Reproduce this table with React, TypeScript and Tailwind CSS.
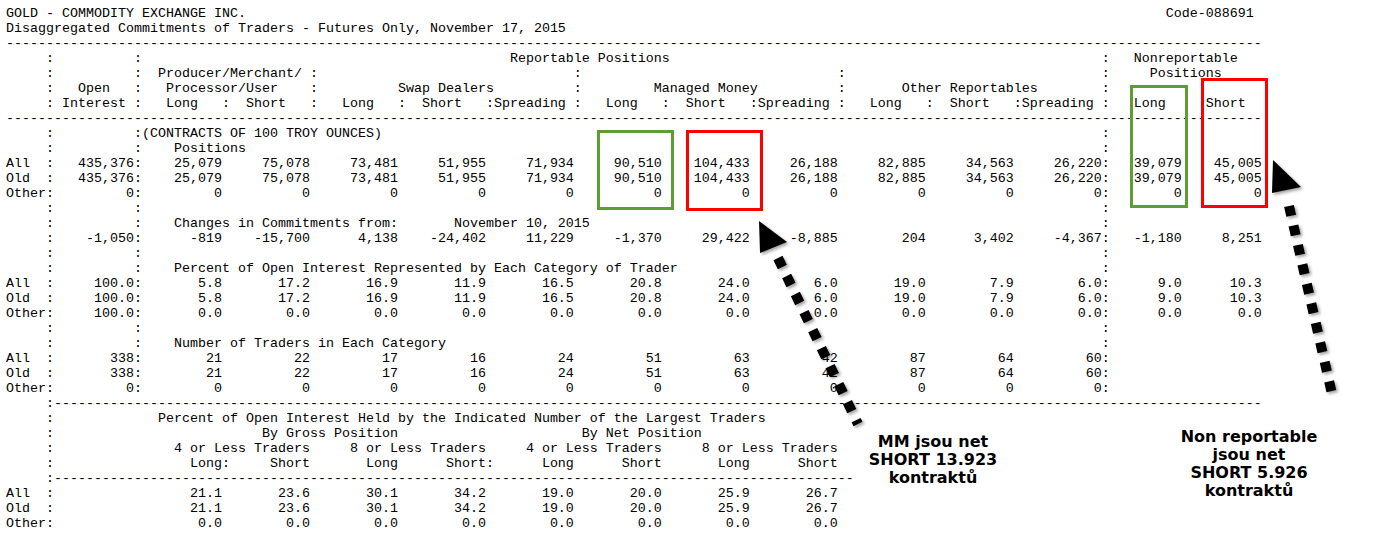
import React from "react";

type Part = [number, string];

// put text pieces on fixed character columns
function line(parts: Part[]): string {
  let s = "";
  for (const [col, txt] of parts) {
    if (s.length < col) s = s.padEnd(col, " ");
    s = s.slice(0, col) + txt;
  }
  return s;
}

// right-align text so its last char lands on column `end`
const r = (end: number, txt: string): Part => [end - txt.length + 1, txt];

const ENDS = [26, 37, 48, 59, 70, 81, 92, 103, 114, 125, 136];

function dataRow(label: string, oi: string, vals: string[], nonrep?: [string, string]): string {
  const parts: Part[] = [];
  if (label) parts.push([0, label]);
  parts.push([5, ":"], r(15, oi), [16, ":"]);
  vals.forEach((v, i) => parts.push(r(ENDS[i], v)));
  parts.push([137, ":"]);
  if (nonrep) parts.push(r(146, nonrep[0]), r(156, nonrep[1]));
  return line(parts);
}

const blank = line([[5, ":"], [16, ":"], [137, ":"]]);
const dashes = "-".repeat(157);

const positions = ["25,079", "75,078", "73,481", "51,955", "71,934", "90,510", "104,433", "26,188", "82,885", "34,563", "26,220"];
const zeros = Array(11).fill("0");
const pct = ["5.8", "17.2", "16.9", "11.9", "16.5", "20.8", "24.0", "6.0", "19.0", "7.9", "6.0"];
const pctZero = Array(11).fill("0.0");
const traders = ["21", "22", "17", "16", "24", "51", "63", "42", "87", "64", "60"];

const BOT_ENDS = [26, 37, 48, 59, 70, 81, 92, 103];
function bottomRow(label: string, vals: string[]): string {
  const parts: Part[] = [[0, label], [5, ":"]];
  vals.forEach((v, i) => parts.push(r(BOT_ENDS[i], v)));
  return line(parts);
}

const lines: string[] = [
  line([[0, "GOLD - COMMODITY EXCHANGE INC."], [145, "Code-088691"]]),
  "Disaggregated Commitments of Traders - Futures Only, November 17, 2015",
  dashes,
  line([[5, ":"], [16, ":"], [63, "Reportable Positions"], [137, ":"], [141, "Nonreportable"]]),
  line([[5, ":"], [16, ":"], [19, "Producer/Merchant/"], [38, ":"], [71, ":"], [104, ":"], [137, ":"], [143, "Positions"]]),
  line([[5, ":"], [9, "Open"], [16, ":"], [20, "Processor/User"], [38, ":"], [49, "Swap Dealers"], [71, ":"], [81, "Managed Money"], [104, ":"], [112, "Other Reportables"], [137, ":"]]),
  line([
    [5, ":"], [7, "Interest"], [16, ":"], [20, "Long"], [27, ":"], [30, "Short"], [38, ":"],
    [42, "Long"], [49, ":"], [52, "Short"], [60, ":Spreading"], [71, ":"],
    [75, "Long"], [82, ":"], [85, "Short"], [93, ":Spreading"], [104, ":"],
    [108, "Long"], [115, ":"], [118, "Short"], [126, ":Spreading"], [137, ":"],
    [141, "Long"], [150, "Short"],
  ]),
  dashes,
  line([[5, ":"], [16, ":(CONTRACTS OF 100 TROY OUNCES)"], [137, ":"]]),
  line([[5, ":"], [16, ":"], [21, "Positions"], [137, ":"]]),
  dataRow("All", "435,376", positions, ["39,079", "45,005"]),
  dataRow("Old", "435,376", positions, ["39,079", "45,005"]),
  dataRow("Other", "0", zeros, ["0", "0"]),
  blank,
  line([[5, ":"], [16, ":"], [21, "Changes in Commitments from:"], [56, "November 10, 2015"], [137, ":"]]),
  dataRow("", "-1,050", ["-819", "-15,700", "4,138", "-24,402", "11,229", "-1,370", "29,422", "-8,885", "204", "3,402", "-4,367"], ["-1,180", "8,251"]),
  blank,
  line([[5, ":"], [16, ":"], [21, "Percent of Open Interest Represented by Each Category of Trader"], [137, ":"]]),
  dataRow("All", "100.0", pct, ["9.0", "10.3"]),
  dataRow("Old", "100.0", pct, ["9.0", "10.3"]),
  dataRow("Other", "100.0", pctZero, ["0.0", "0.0"]),
  blank,
  line([[5, ":"], [16, ":"], [21, "Number of Traders in Each Category"], [137, ":"]]),
  dataRow("All", "338", traders),
  dataRow("Old", "338", traders),
  dataRow("Other", "0", zeros),
  line([[5, ":" + "-".repeat(151)]]),
  line([[5, ":"], [19, "Percent of Open Interest Held by the Indicated Number of the Largest Traders"]]),
  line([[5, ":"], [32, "By Gross Position"], [72, "By Net Position"]]),
  line([[5, ":"], [21, "4 or Less Traders"], [43, "8 or Less Traders"], [65, "4 or Less Traders"], [87, "8 or Less Traders"]]),
  line([[5, ":"], [23, "Long:"], [33, "Short"], [45, "Long"], [55, "Short:"], [67, "Long"], [77, "Short"], [89, "Long"], [99, "Short"]]),
  line([[5, ":" + "-".repeat(100)]]),
  bottomRow("All", ["21.1", "23.6", "30.1", "34.2", "19.0", "20.0", "25.9", "26.7"]),
  bottomRow("Old", ["21.1", "23.6", "30.1", "34.2", "19.0", "20.0", "25.9", "26.7"]),
  bottomRow("Other", Array(8).fill("0.0")),
];

function Arrows() {
  return (
    <svg className="absolute left-0 top-0 pointer-events-none" width={1373} height={538} viewBox="0 0 1373 538">
      <defs>
        <filter id="sh" x="-20%" y="-20%" width="140%" height="140%">
          <feDropShadow dx="2" dy="2" stdDeviation="1.5" floodColor="#000" floodOpacity="0.35" />
        </filter>
      </defs>
      <g filter="url(#sh)">
        {/* MM arrow */}
        <line x1={778} y1={258} x2={858} y2={424} stroke="#000" strokeWidth={10} strokeDasharray="10 10" />
        <polygon points="759,221 787,242 760,253" fill="#000" />
        {/* nonreportable arrow */}
        <line x1={1289} y1={206} x2={1332} y2={394} stroke="#000" strokeWidth={10} strokeDasharray="10 10" />
        <polygon points="1273,160 1301,187 1272,193" fill="#000" />
      </g>
    </svg>
  );
}

function Note({ lines: noteLines, className }: { lines: string[]; className: string }) {
  return (
    <div
      className={`absolute -translate-x-1/2 flex flex-col items-center font-['DejaVu_Sans',Verdana,sans-serif] font-bold text-[16px] leading-[18px] text-black whitespace-nowrap ${className}`}
    >
      {noteLines.map((t) => (
        <span key={t}>{t}</span>
      ))}
    </div>
  );
}

export default function App() {
  return (
    <div className="relative w-[1373px] h-[538px] bg-white overflow-hidden">
      {/* report: one fixed-width line per row */}
      <div className="flex flex-col items-start pl-[6px] pt-[6px] font-['Liberation_Mono','Courier_New',monospace] text-[13.333px] leading-[15px] text-black">
        {lines.map((l, i) => (
          <div key={i} className="whitespace-pre h-[15px]">
            {l}
          </div>
        ))}
      </div>

      {/* highlight boxes */}
      <div className="absolute left-[597px] top-[130px] w-[77px] h-[80px] border-[3px] border-[#5c9e31]" />
      <div className="absolute left-[686px] top-[130px] w-[77px] h-[81px] border-[3px] border-[#ff0000]" />
      <div className="absolute left-[1130px] top-[85px] w-[58px] h-[123px] border-[3px] border-[#5c9e31]" />
      <div className="absolute left-[1201px] top-[78px] w-[67px] h-[130px] border-[3px] border-[#ff0000]" />

      <Arrows />

      <Note className="left-[933px] top-[433px]" lines={["MM jsou net", "SHORT 13.923", "kontraktů"]} />
      <Note className="left-[1249px] top-[428px]" lines={["Non reportable", "jsou net", "SHORT 5.926", "kontraktů"]} />
    </div>
  );
}
